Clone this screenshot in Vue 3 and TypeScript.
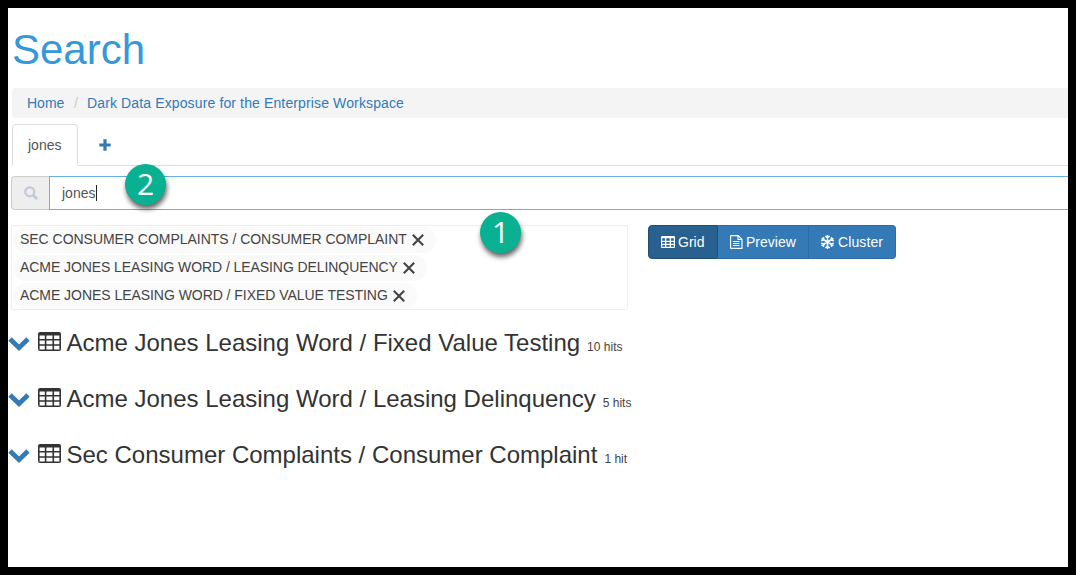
<script setup lang="ts">
interface Filter { label: string; cls: string }
interface Result { title: string; hits: string; cls: string }

const filters: Filter[] = [
  { label: 'SEC CONSUMER COMPLAINTS / CONSUMER COMPLAINT', cls: 'f1' },
  { label: 'ACME JONES LEASING WORD / LEASING DELINQUENCY', cls: 'f2' },
  { label: 'ACME JONES LEASING WORD / FIXED VALUE TESTING', cls: 'f3' },
]
const results: Result[] = [
  { title: 'Acme Jones Leasing Word / Fixed Value Testing', hits: '10 hits', cls: 'r1' },
  { title: 'Acme Jones Leasing Word / Leasing Delinquency', hits: '5 hits', cls: 'r2' },
  { title: 'Sec Consumer Complaints / Consumer Complaint', hits: '1 hit', cls: 'r3' },
]
</script>

<template>
  <div class="page">
    <h1><span>Search</span></h1>
    <nav class="breadcrumb">
      <a class="home">Home</a><span class="slash">/</span><a class="crumb">Dark Data Exposure for the Enterprise Workspace</a>
    </nav>
    <div class="tabs">
      <div class="tab">jones</div>
      <div class="add">
        <svg width="12" height="12" viewBox="0 0 12 12"><path d="M6 .3v11.4M.3 6h11.4" stroke="#337ab7" stroke-width="3.2" /></svg>
      </div>
    </div>
    <div class="search">
      <div class="addon">
        <svg width="14" height="14" viewBox="0 0 14 14" fill="none" stroke="#c3cbd9">
          <circle cx="5.8" cy="5.8" r="4.5" stroke-width="2.3" />
          <path d="M9.3 9.3l3 3" stroke-width="2.9" stroke-linecap="round" />
        </svg>
      </div>
      <div class="input"><span>jones</span><i class="caret"></i></div>
      <div class="badge two">2</div>
    </div>
    <div class="tools">
      <div class="filters">
        <div v-for="f in filters" :key="f.label" class="pill">
          <span :class="f.cls">{{ f.label }}</span>
          <svg width="12" height="12" viewBox="0 0 12 12"><path d="M.8.8l10.4 10.4M11.2.8L.8 11.2" stroke="#444" stroke-width="2.1" /></svg>
        </div>
        <div class="badge one">1</div>
      </div>
      <div class="group">
        <button class="btn active">
          <svg width="14" height="12" viewBox="0 0 14 12">
            <path fill="#fff" fill-rule="evenodd" d="M1 0h12q1 0 1 1v10q0 1-1 1H1q-1 0-1-1V1q0-1 1-1zM1.2 2.2V4.7h2.8V2.2zM5.3 2.2V4.7h3.4V2.2zM10 2.2V4.7h2.8V2.2zM1.2 6v1.8h2.8V6zM5.3 6v1.8h3.4V6zM10 6v1.8h2.8V6zM1.2 9v1.8h2.8V9zM5.3 9v1.8h3.4V9zM10 9v1.8h2.8V9z" />
          </svg>
          <span>Grid</span>
        </button>
        <button class="btn preview">
          <svg width="13" height="14" viewBox="0 0 13 14" fill="none" stroke="#fff" stroke-width="1.15">
            <path d="M1.2.6h7l3.8 3.8v9H1.2q-.6 0-.6-.6V1.2q0-.6.6-.6zM8 .8v3.7h3.8M3 6.5h6.5M3 8.5h6.5M3 10.5h6.5" />
          </svg>
          <span>Preview</span>
        </button>
        <button class="btn cluster">
          <svg width="13" height="14" viewBox="0 0 13 14" fill="none" stroke="#fff" stroke-width="1.5">
            <path d="M6.5 0v14M.5 3.5l12 7M12.5 3.5l-12 7M4.4 1l2.1 2 2.1-2M4.4 13l2.1-2 2.1 2M.2 5.8l2.9-.8-.8-2.9M12.8 8.2l-2.9.8.8 2.9M.2 8.2l2.9.8-.8 2.9M12.8 5.8L9.9 5l.8-2.9" />
          </svg>
          <span>Cluster</span>
        </button>
      </div>
    </div>
    <div class="results">
      <div v-for="r in results" :key="r.title" class="result">
        <svg class="chev" width="22" height="14" viewBox="0 0 22 14"><path d="M2 2.1l9 8.6 9-8.6" fill="none" stroke="#337ab7" stroke-width="4.8" /></svg>
        <svg class="table" width="23" height="19" viewBox="0 0 23 19">
          <path fill="#333" fill-rule="evenodd" d="M2 0h19q2 0 2 2v15q0 2-2 2H2q-2 0-2-2V2q0-2 2-2zM1.6 3.6v3.5h5.2V3.6zM8.4 3.6v3.5h6.1V3.6zM16.1 3.6v3.5h5.3V3.6zM1.6 8.6v3.6h5.2V8.6zM8.4 8.6v3.6h6.1V8.6zM16.1 8.6v3.6h5.3V8.6zM1.6 13.7v3.7h5.2v-3.7zM8.4 13.7v3.7h6.1v-3.7zM16.1 13.7v3.7h5.3v-3.7z" />
        </svg>
        <h3 :class="r.cls">{{ r.title }}</h3>
        <small>{{ r.hits }}</small>
      </div>
    </div>
  </div>
</template>

<style>
body { margin: 0; background: #000; }
</style>

<style scoped>
* { box-sizing: border-box; }
.page {
  width: 1076px; height: 575px; border: 8px solid #000; background: #fff; overflow: hidden;
  font: 14px/20px "Liberation Sans", Arial, sans-serif; color: #555;
}
h1 { margin: 0; height: 80px; padding: 19px 0 0 4px; font-size: 42px; line-height: 46px; font-weight: 400; color: #3498db; }
.breadcrumb { display: flex; height: 30px; margin-left: 4px; padding: 5px 0 0 15px; background: #f4f4f4; border-radius: 4px 0 0 4px; color: #337ab7; white-space: nowrap; }
.home { width: 47px; }
.slash { width: 13px; color: #ccc; }
.crumb { letter-spacing: .128px; }
.tabs { display: flex; height: 42px; margin: 6px 0 0 4px; border-bottom: 1px solid #ddd; }
.tab { width: 66px; height: 42px; padding: 10px 0 0 15px; border: 1px solid #ddd; border-bottom-color: #fff; border-radius: 4px 4px 0 0; background: #fff; }
.add { padding: 15px 0 0 21px; line-height: 0; }
.search { position: relative; display: flex; height: 34px; margin: 10px 0 0 3px; }
.addon { width: 38px; border: 1px solid #ccc; border-right: 0; border-radius: 4px 0 0 4px; background: #eee; display: flex; align-items: center; justify-content: center; }
.input { flex: 1; display: flex; padding: 6px 0 0 12px; border: 1px solid #66afe9; border-right: 0; }
.caret { width: 1px; height: 16px; margin: 2px 0 0 .5px; background: #222; }
.badge { position: absolute; width: 41px; height: 41px; border-radius: 50%; background: #09b092; color: #fff; font: 30px/39px "Open Sans", "Noto Sans", sans-serif; text-align: center; box-shadow: 1px 4px 5px rgba(0, 0, 0, .6); }
.two { left: 114px; top: -12px; }
.one { left: 468px; top: -14px; }
.tools { display: flex; margin: 15px 0 0 3px; align-items: flex-start; }
.filters { position: relative; width: 617px; height: 85px; padding: 1px; border: 1px solid #eee; border-radius: 2px; }
.pill { display: flex; align-items: flex-start; width: max-content; height: 26px; margin-bottom: 2px; padding: 2px 12px 0 7px; border-radius: 13px; background: #fafafa; color: #444; white-space: nowrap; }
.pill svg { margin: 5px 0 0 5px; }
.f1 { letter-spacing: -.03px; }
.f2 { letter-spacing: -.075px; }
.f3 { letter-spacing: -.045px; }
.group { display: flex; margin-left: 20px; }
.btn { display: flex; align-items: center; height: 34px; margin: 0; padding: 0 0 0 12px; border: 1px solid #2e6da4; background: #337ab7; color: #fff; font: 14px/20px "Liberation Sans", Arial, sans-serif; }
.btn span { margin-left: 3px; }
.active { width: 70px; background: #286090; border-color: #204d74; border-radius: 4px 0 0 4px; }
.preview { width: 91px; border-left: 0; }
.cluster { width: 87px; border-left: 0; border-radius: 0 4px 4px 0; }
.cluster span { margin-left: 4px; letter-spacing: .1px; }
.results { margin-top: 17px; }
.result { display: flex; height: 56px; white-space: nowrap; color: #333; }
.chev { margin-top: 10px; }
.table { margin: 5px 0 0 8px; }
h3 { margin: 2px 0 0 5.5px; font-size: 24px; line-height: 28px; font-weight: 400; }
small { margin: 10px 0 0 7px; font-size: 12px; line-height: 20px; color: #444; }
</style>
